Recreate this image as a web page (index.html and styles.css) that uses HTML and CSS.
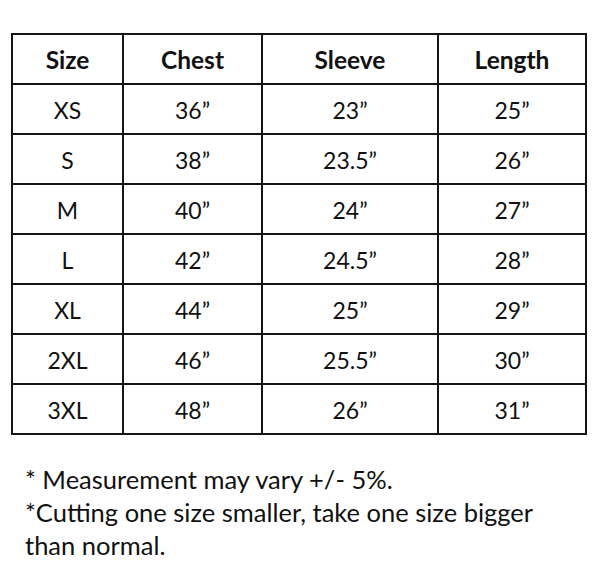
FILE: index.html
```html
<!DOCTYPE html>
<html>
<head>
<meta charset="utf-8">
<link rel="stylesheet" href="styles.css">
</head>
<body>
<div class="page">
  <table class="size-table">
    <colgroup>
      <col class="c1"><col class="c2"><col class="c3"><col class="c4">
    </colgroup>
    <thead>
      <tr><th>Size</th><th>Chest</th><th>Sleeve</th><th>Length</th></tr>
    </thead>
    <tbody>
      <tr><td>XS</td><td>36”</td><td>23”</td><td>25”</td></tr>
      <tr><td>S</td><td>38”</td><td>23.5”</td><td>26”</td></tr>
      <tr><td>M</td><td>40”</td><td>24”</td><td>27”</td></tr>
      <tr><td>L</td><td>42”</td><td>24.5”</td><td>28”</td></tr>
      <tr><td>XL</td><td>44”</td><td>25”</td><td>29”</td></tr>
      <tr><td>2XL</td><td>46”</td><td>25.5”</td><td>30”</td></tr>
      <tr><td>3XL</td><td>48”</td><td>26”</td><td>31”</td></tr>
    </tbody>
  </table>
  <div class="notes">
    <p class="note">* Measurement may vary +/- 5%.</p>
    <p class="note">*Cutting one size smaller, take one size bigger than normal.</p>
  </div>
</div>
</body>
</html>
```
FILE: styles.css
```css
html, body {
  margin: 0;
  padding: 0;
  background: #ffffff;
}
.page {
  padding: 33px 0 0 11px;
  font-family: Lato, "Open Sans", sans-serif;
  color: #111111;
}
.size-table {
  border-collapse: collapse;
  width: 574px;
  table-layout: fixed;
}
.c1 { width: 111px; }
.c2 { width: 139px; }
.c3 { width: 176px; }
.c4 { width: 148px; }
.size-table th,
.size-table td {
  border: 2px solid #151515;
  text-align: center;
  padding: 0;
  line-height: 24px;
}
.size-table th {
  height: 46px;
  font-size: 24.5px;
  font-weight: 700;
  padding-top: 2px;
}
.size-table td {
  height: 46px;
  font-size: 23px;
  font-weight: 400;
  padding-top: 2px;
}
.notes {
  padding: 28px 0 0 14px;
  width: 525px;
}
.note {
  margin: 0;
  font-size: 25.5px;
  line-height: 33px;
}
```
